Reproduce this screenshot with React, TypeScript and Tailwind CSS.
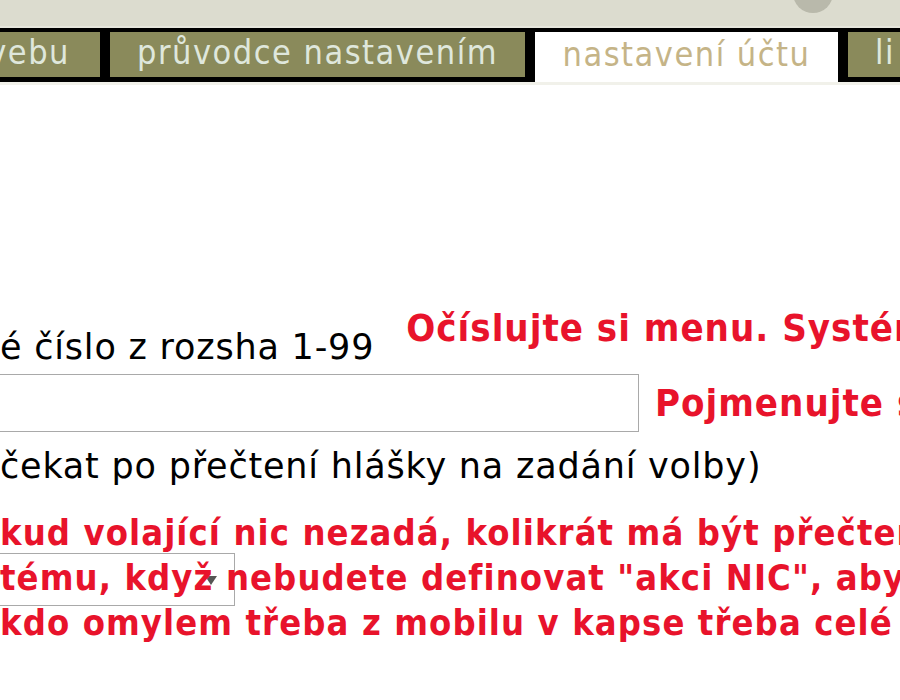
const tabFont = "font-['DejaVu_Sans_Condensed',sans-serif] tracking-[1.5px]";
const redFont = "font-['DejaVu_Sans_Condensed',sans-serif] font-bold text-[#e8132b]";

function Tab({ label, active, className }: { label: string; active?: boolean; className: string }) {
  return (
    <div
      className={
        "flex shrink-0 items-center whitespace-nowrap text-[34px] leading-none " +
        tabFont +
        " " +
        (active ? "h-[50px] bg-white text-[#c5b487]" : "h-[45px] bg-[#8a8a5b] text-[#dfe7dc]") +
        " " +
        className
      }
    >
      <span className="pb-[6px]">{label}</span>
    </div>
  );
}

export default function App() {
  return (
    <div className="relative h-[700px] w-[900px] overflow-hidden bg-white font-['DejaVu_Sans',sans-serif]">
      {/* horní lišta prohlížeče */}
      <div className="relative h-[28px] border-b-[2px] border-[#e6e6dc] bg-[#dcdccf]">
        <div className="absolute left-[793px] top-[-27px] h-[40px] w-[40px] rounded-full bg-[#b9b9ab]" />
      </div>

      {/* záložky */}
      <div className="flex h-[54px] items-start gap-[10px] overflow-hidden bg-black pt-[4px]">
        <Tab label="vebu" className="w-[100px] justify-end pr-[30px]" />
        <Tab label="průvodce nastavením" className="w-[415px] justify-center" />
        <Tab label="nastavení účtu" active className="w-[303px] justify-center" />
        <Tab label="li" className="w-[300px] justify-start pl-[27px]" />
      </div>
      <div className="h-[3px] bg-[#f1f1ea]" />

      <div className="h-[223px]" />

      {/* řádek 1 */}
      <div className="flex items-start whitespace-nowrap">
        <div className="pt-[19px] text-[35px] leading-[40px] tracking-[0.8px] text-black">é číslo z rozsha 1-99</div>
        <div className={"ml-[32px] text-[38px] leading-[40px] tracking-[1px] " + redFont}>Očíslujte si menu. Systém</div>
      </div>

      {/* řádek 2 */}
      <div className="mt-[7px] flex items-center whitespace-nowrap">
        <div className="ml-[-10px] h-[58px] w-[649px] shrink-0 border border-[#a9a9a9] bg-white" />
        <div className={"ml-[16px] text-[38px] tracking-[1px] " + redFont}>Pojmenujte si</div>
      </div>

      <div className="mt-[14px] whitespace-nowrap text-[35px] leading-[40px] tracking-[0.8px] text-black">
        čekat po přečtení hlášky na zadání volby)
      </div>

      {/* výběr */}
      <div className="relative ml-[-10px] mt-[67px] h-[53px] w-[245px] border border-[#a9a9a9] bg-white">
        <svg className="absolute left-[213px] top-[19px]" width="14" height="14" viewBox="0 0 14 14">
          <path d="M1 3 L13 3 L7 12 Z" fill="#555" />
        </svg>
      </div>

      {/* červená poznámka přes obsah */}
      <div className={"absolute left-0 top-[510px] whitespace-nowrap text-[36px] leading-[45px] tracking-[1.1px] " + redFont}>
        <div>kud volající nic nezadá, kolikrát má být přečtena</div>
        <div>tému, když nebudete definovat "akci NIC", aby</div>
        <div>kdo omylem třeba z mobilu v kapse třeba celé</div>
      </div>
    </div>
  );
}
